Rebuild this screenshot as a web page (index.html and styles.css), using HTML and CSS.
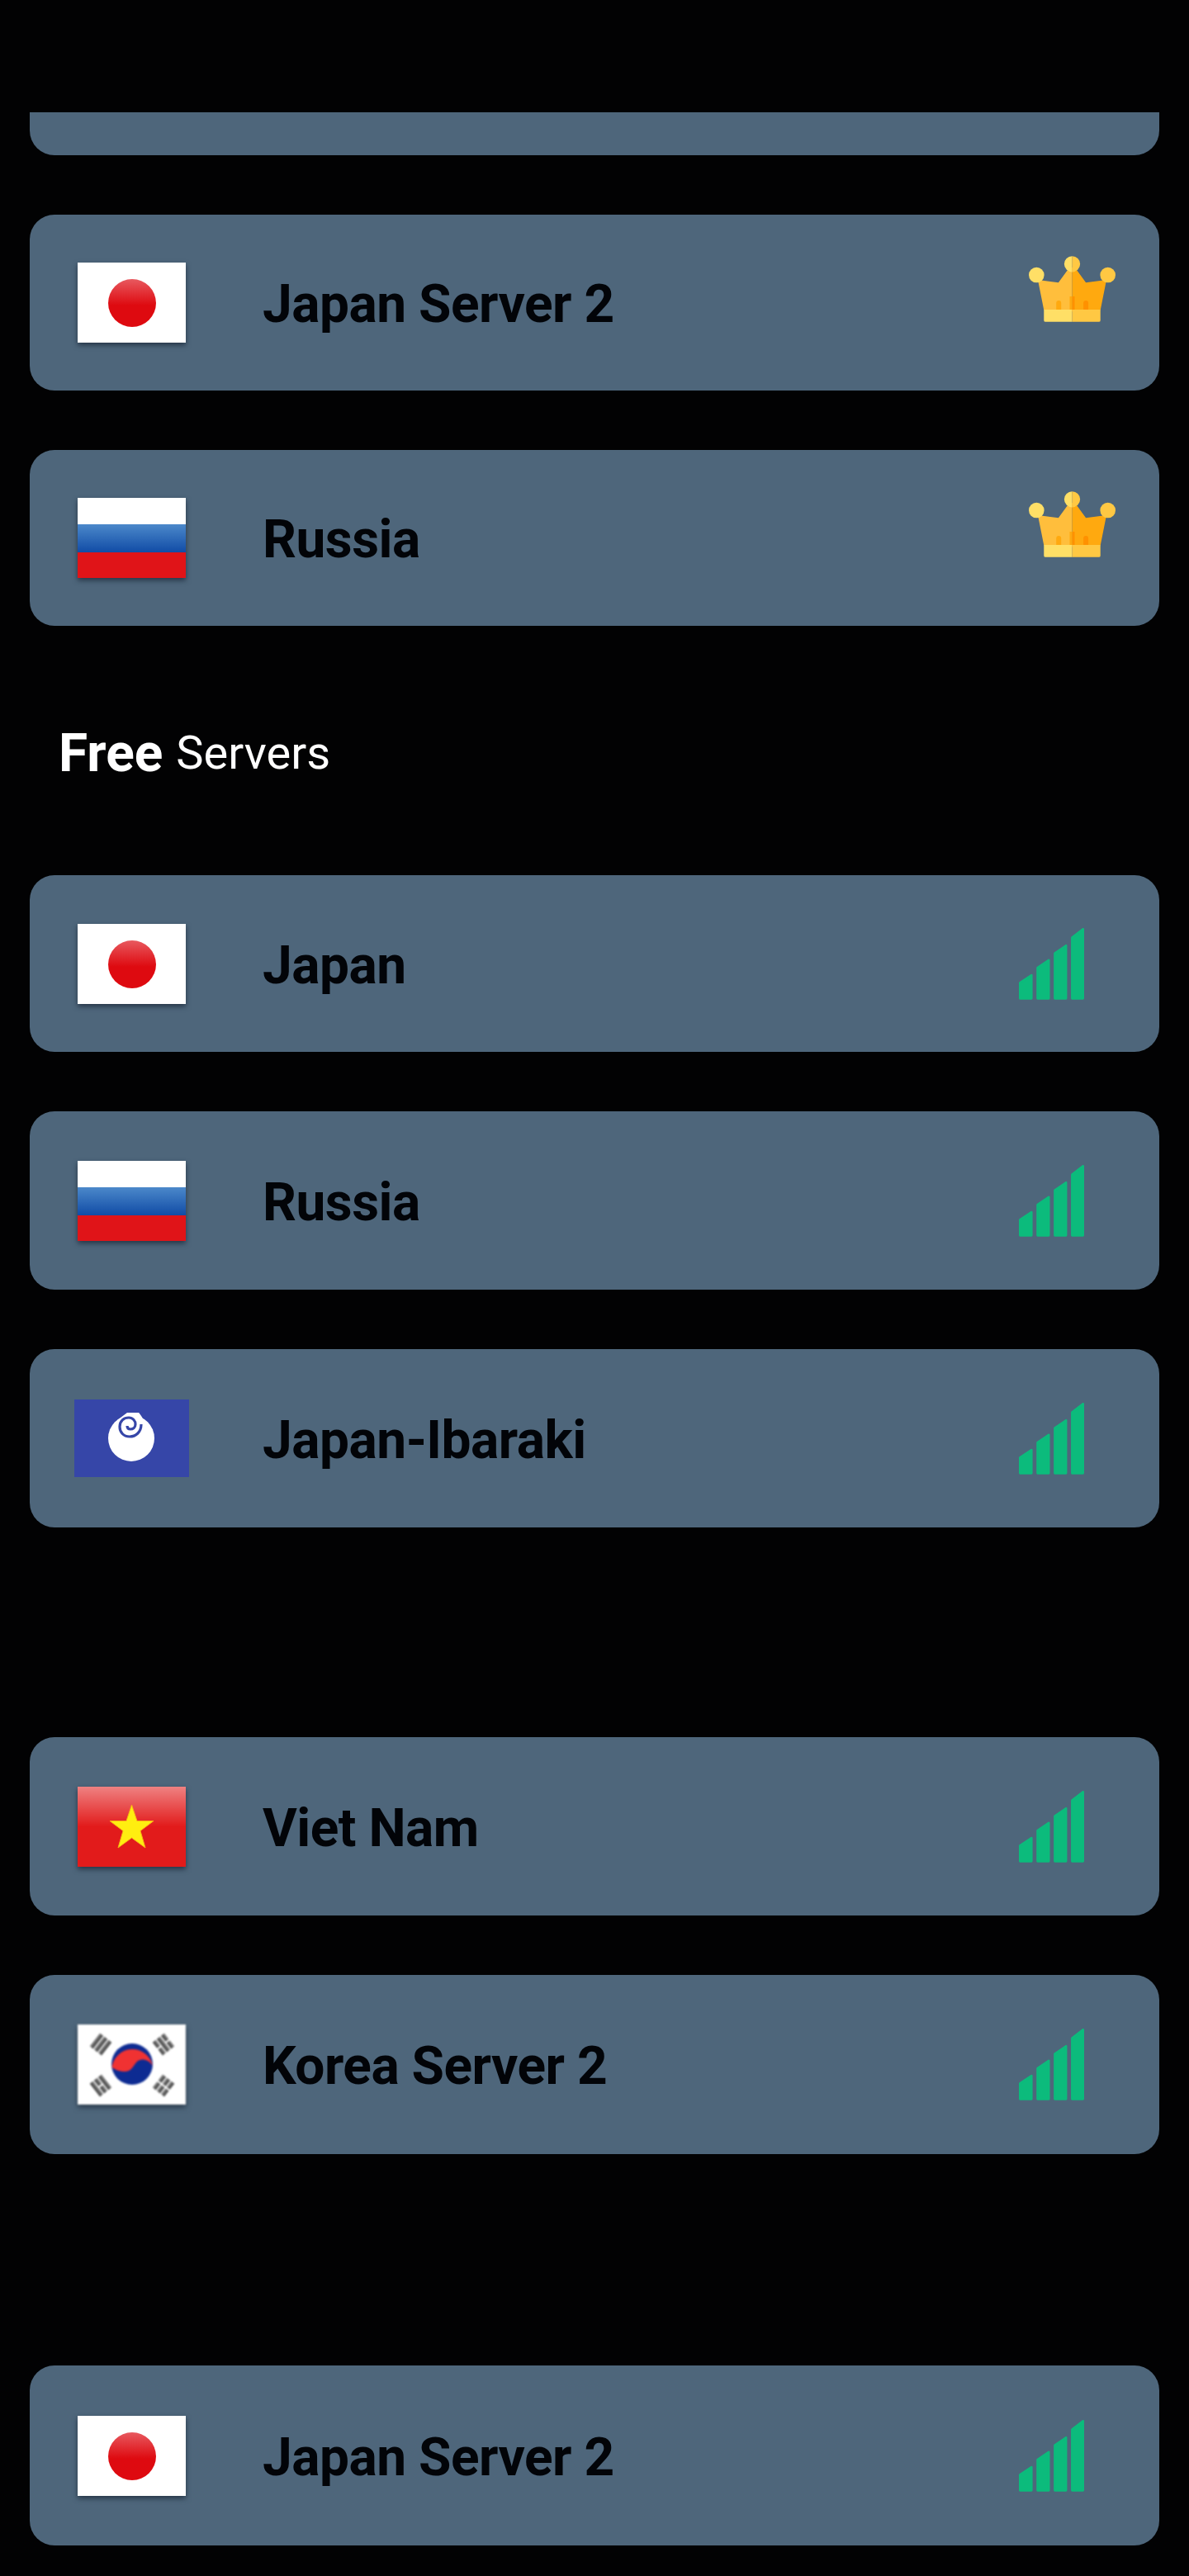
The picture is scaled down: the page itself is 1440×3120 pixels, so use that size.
FILE: index.html
```html
<!DOCTYPE html>
<html lang="en">
<head>
  <meta charset="UTF-8">
  <meta name="viewport" content="width=device-width, initial-scale=1.0">
  <title>Servers</title>
  <link rel="stylesheet" href="styles.css">
</head>
<body>
  <!-- Shared icons and flags -->
  <svg class="defs" aria-hidden="true">
    <defs>
      <linearGradient id="gloss" x1="0" y1="0" x2="0" y2="1">
        <stop offset="0" stop-color="#fff" stop-opacity=".45"/>
        <stop offset=".5" stop-color="#fff" stop-opacity="0"/>
      </linearGradient>
      <linearGradient id="blue-band" x1="0" y1="0" x2="0" y2="1">
        <stop offset="0" stop-color="#4b88ca"/>
        <stop offset="1" stop-color="#114ca6"/>
      </linearGradient>
      <linearGradient id="red-dot" x1="0" y1="0" x2="0" y2="1">
        <stop offset="0" stop-color="#e8595f"/>
        <stop offset=".55" stop-color="#de0a10"/>
      </linearGradient>
      <linearGradient id="trigram" x1="0" y1="0" x2="0" y2="1">
        <stop offset="0" stop-color="#8a8a8a"/>
        <stop offset="1" stop-color="#3a3a3a"/>
      </linearGradient>
      <symbol id="flag-japan" viewBox="0 0 131 97">
        <rect width="131" height="97" fill="#fff"/>
        <circle cx="66" cy="49" r="29" fill="url(#red-dot)"/>
      </symbol>
      <symbol id="flag-russia" viewBox="0 0 131 97">
        <rect width="131" height="32" fill="#fff"/>
        <rect y="32" width="131" height="34" fill="url(#blue-band)"/>
        <rect y="66" width="131" height="31" fill="#e01418"/>
      </symbol>
      <symbol id="flag-vietnam" viewBox="0 0 131 97">
        <rect width="131" height="97" fill="#e21b1b"/>
        <rect width="131" height="97" fill="url(#gloss)"/>
        <polygon points="65.5,22 72,41.5 92,41.5 76,53.5 82,74 65.5,62 49,74 55,53.5 39,41.5 59,41.5" fill="#ffee10" stroke="#f7b016" stroke-width="1"/>
      </symbol>
      <symbol id="flag-korea" viewBox="0 0 131 97">
        <rect width="131" height="97" fill="#fff"/>
        <circle cx="66" cy="48" r="25" fill="#0d2b92"/>
        <path d="M41.5 52A25 25 0 0 1 90.8 50C86 42 78 41 73 44C68 48 66 57 58 57C51 57 46 55 41.5 52Z" fill="#f03232"/>
        <g fill="url(#trigram)">
          <g transform="rotate(-52 28 24)"><rect x="18" y="15" width="20" height="5"/><rect x="18" y="21.5" width="20" height="5"/><rect x="18" y="28" width="20" height="5"/></g>
          <g transform="rotate(52 104 24)"><rect x="94" y="15" width="9" height="5"/><rect x="105" y="15" width="9" height="5"/><rect x="94" y="21.5" width="20" height="5"/><rect x="94" y="28" width="9" height="5"/><rect x="105" y="28" width="9" height="5"/></g>
          <g transform="rotate(52 28 74)"><rect x="18" y="65" width="20" height="5"/><rect x="18" y="71.5" width="9" height="5"/><rect x="29" y="71.5" width="9" height="5"/><rect x="18" y="78" width="20" height="5"/></g>
          <g transform="rotate(-52 104 74)"><rect x="94" y="65" width="9" height="5"/><rect x="105" y="65" width="9" height="5"/><rect x="94" y="71.5" width="9" height="5"/><rect x="105" y="71.5" width="9" height="5"/><rect x="94" y="78" width="9" height="5"/><rect x="105" y="78" width="9" height="5"/></g>
        </g>
      </symbol>
      <symbol id="flag-ibaraki" viewBox="0 0 139 94">
        <rect width="139" height="94" fill="#3646a8"/>
        <circle cx="69" cy="47" r="28" fill="#fff"/>
        <path d="M78 16c7 8 9 16 7 23l-14 8l-17 -8l-2 -14l12 -9z" fill="#fff"/>
        <path d="M81 30c0 10 -7 15 -14 15c-8 0 -12 -6 -12 -12c0 -7 5 -11 11 -11c5 0 8 4 8 8c0 4 -3 6 -6 6c-3 0 -4 -2 -4 -4" fill="none" stroke="#3646a8" stroke-width="3.2"/>
        <path d="M78 16l5 9l-3 0z" fill="#fff"/>
      </symbol>
      <symbol id="crown" viewBox="197 118 316 240">
        <path d="M230 205L305 215L345 160H355V315H252Z" fill="#ffbe3c"/>
        <path d="M480 205L405 215L365 160H355V315H458Z" fill="#ffa90f"/>
        <rect x="297" y="280" width="18" height="40" rx="9" fill="#ffa90f"/>
        <rect x="346" y="265" width="9" height="55" fill="#ffa90f"/>
        <rect x="355" y="265" width="9" height="55" fill="#ff9100"/>
        <rect x="396" y="280" width="18" height="40" rx="9" fill="#ff9100"/>
        <path d="M252 313H355V358H258a6 6 0 0 1-6-6Z" fill="#ffdf66"/>
        <path d="M458 313H355V358H452a6 6 0 0 0 6-6Z" fill="#ffc843"/>
        <circle cx="225" cy="187" r="28" fill="#ffdf66"/>
        <circle cx="485" cy="187" r="28" fill="#ffc843"/>
        <path d="M355 118a29 29 0 0 0 0 58Z" fill="#ffdf66"/>
        <path d="M355 118a29 29 0 0 1 0 58Z" fill="#ffc843"/>
      </symbol>
      <symbol id="signal" viewBox="162 97 238 262">
        <g fill="#0cbb7c" stroke="#0cbb7c" stroke-width="8" stroke-linejoin="round">
          <path d="M166 297L208 269V354H166Z"/>
          <path d="M230 242L271 214V354H230Z"/>
          <path d="M293 189L334 161V354H293Z"/>
          <path d="M356 132L396 101V354H356Z"/>
        </g>
      </symbol>
    </defs>
  </svg>

  <!-- Empty bar above the scrolled list -->
  <div class="top-bar"></div>

  <div class="server-list">
    <!-- Premium servers -->
    <div class="server-card server-card-cut"></div>

    <div class="server-card card-s">
      <div class="flag-slot"><svg class="flag"><use href="#flag-japan"/></svg></div>
      <span class="server-name">Japan Server 2</span>
      <svg class="crown"><use href="#crown"/></svg>
    </div>

    <div class="server-card card-s">
      <div class="flag-slot"><svg class="flag"><use href="#flag-russia"/></svg></div>
      <span class="server-name">Russia</span>
      <svg class="crown"><use href="#crown"/></svg>
    </div>

    <!-- Free servers -->
    <h2 class="section-title"><b>Free</b> Servers</h2>

    <div class="server-card card-m">
      <div class="flag-slot"><svg class="flag"><use href="#flag-japan"/></svg></div>
      <span class="server-name">Japan</span>
      <svg class="signal"><use href="#signal"/></svg>
    </div>

    <div class="server-card">
      <div class="flag-slot"><svg class="flag"><use href="#flag-russia"/></svg></div>
      <span class="server-name">Russia</span>
      <svg class="signal"><use href="#signal"/></svg>
    </div>

    <div class="server-card">
      <div class="flag-slot"><svg class="flag-plain"><use href="#flag-ibaraki"/></svg></div>
      <span class="server-name">Japan-Ibaraki</span>
      <svg class="signal"><use href="#signal"/></svg>
    </div>

    <div class="spacer"></div>

    <div class="server-card">
      <div class="flag-slot"><svg class="flag"><use href="#flag-vietnam"/></svg></div>
      <span class="server-name">Viet Nam</span>
      <svg class="signal"><use href="#signal"/></svg>
    </div>

    <div class="server-card card-l">
      <div class="flag-slot"><svg class="flag flag-soft"><use href="#flag-korea"/></svg></div>
      <span class="server-name">Korea Server 2</span>
      <svg class="signal"><use href="#signal"/></svg>
    </div>

    <div class="spacer spacer-tall"></div>

    <div class="server-card card-xl">
      <div class="flag-slot"><svg class="flag"><use href="#flag-japan"/></svg></div>
      <span class="server-name">Japan Server 2</span>
      <svg class="signal"><use href="#signal"/></svg>
    </div>
  </div>
</body>
</html>
```

FILE: styles.css
```css
/* Base layout */
body {
  margin: 0;
  height: 3120px;
  overflow: hidden;
  display: flex;
  flex-direction: column;
  background-color: #020203;
  font-family: Roboto, "Liberation Sans", sans-serif;
}

.defs {
  position: absolute;
  width: 0;
  height: 0;
}

.top-bar {
  height: 136px;
  flex-shrink: 0;
}

/* Scrolled list, first card is cut off by the top bar */
.server-list {
  flex: 1;
  overflow: hidden;
  display: flex;
  flex-direction: column;
  gap: 72px;
  padding: 0 36px;
}

.server-card {
  display: flex;
  align-items: center;
  flex-shrink: 0;
  height: 216px;
  background-color: #4e667b;
  border-radius: 30px;
}

.server-card-cut {
  margin-top: -164px;
}

/* Row heights differ slightly down the list */
.card-s {
  height: 213px;
}

.card-m {
  height: 214px;
}

.card-l {
  height: 217px;
}

.card-xl {
  height: 218px;
}

/* Flags */
.flag-slot {
  display: flex;
  justify-content: center;
  width: 139px;
  margin-left: 54px;
  margin-right: 89px;
}

.flag {
  width: 131px;
  height: 97px;
  filter: blur(0.6px) drop-shadow(0 3px 3px rgba(10, 20, 35, 0.6));
}

.flag-soft {
  filter: blur(1px) drop-shadow(0 3px 3px rgba(10, 20, 35, 0.6));
}

.flag-plain {
  width: 139px;
  height: 94px;
}

.server-name {
  flex: 1;
  padding-top: 4px;
  font-size: 64px;
  font-weight: 700;
  color: #020408;
  letter-spacing: -0.5px;
}

/* Right side icons */
.crown {
  width: 105px;
  height: 80px;
  margin-right: 53px;
  margin-top: -34px;
}

.signal {
  width: 79px;
  height: 87px;
  margin-right: 91px;
}

/* Section heading */
.section-title {
  display: flex;
  align-items: center;
  gap: 16px;
  box-sizing: border-box;
  height: 158px;
  margin: 0;
  padding: 6px 0 0 35px;
  font-size: 56px;
  font-weight: 400;
  color: #fff;
}

.section-title b {
  font-size: 64px;
  font-weight: 700;
}

.spacer {
  height: 110px;
  flex-shrink: 0;
}

.spacer-tall {
  height: 112px;
}
```
